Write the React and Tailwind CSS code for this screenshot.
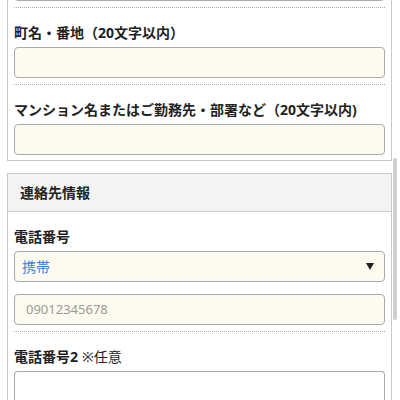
const font = { fontFamily: '"Noto Sans", "Noto Sans CJK JP", sans-serif' };

function Field({ label, note, children, last }) {
  return (
    <div
      className={
        "pt-[15px] " +
        (last ? "pb-[5px]" : "pb-[6px] border-b border-dotted border-[#a9a9a9]")
      }
    >
      <div className="text-[14px] leading-[20px] font-bold text-[#222] mb-[4px]">
        {label}
        {note && <span className="font-normal ml-[4px]">{note}</span>}
      </div>
      {children}
    </div>
  );
}

function TextBox({ placeholder }) {
  return (
    <div className="h-[31px] rounded-[4px] border border-[#aaaaaa] bg-[#fdfbef] flex items-center px-[11px] text-[13px] text-[#9a9a9a]">
      {placeholder}
    </div>
  );
}

export default function App() {
  return (
    <div className="relative w-[400px] h-[400px] overflow-hidden bg-white" style={font}>
      <div className="pl-[7px] pr-[8px]">
        {/* address card, top is scrolled off */}
        <div className="border border-[#c9c9c9] px-[6px] mt-[-31px]">
          <div className="pb-[6px] border-b border-dotted border-[#a9a9a9]">
            <TextBox />
          </div>
          <Field label="町名・番地（20文字以内）">
            <TextBox />
          </Field>
          <Field label="マンション名またはご勤務先・部署など（20文字以内)" last>
            <TextBox />
          </Field>
        </div>

        {/* contact card */}
        <div className="border border-[#c9c9c9] mt-[12px]">
          <div className="h-[38px] bg-[#f3f3f3] border-b border-[#c9c9c9] flex items-center pl-[12px] text-[14px] font-bold text-[#222]">
            連絡先情報
          </div>
          <div className="px-[6px]">
            <div className="pt-[15px] pb-[6px] border-b border-dotted border-[#a9a9a9]">
              <div className="text-[14px] leading-[20px] font-bold text-[#222] mb-[4px]">
                電話番号
              </div>
              <div className="h-[31px] rounded-[4px] border border-[#aaaaaa] bg-[#fdfbef] flex items-center justify-between pl-[7px] pr-[10px]">
                <span className="text-[14px] text-[#3d7ee6]">携帯</span>
                <svg width="8" height="7" viewBox="0 0 8 7">
                  <path d="M0 0 H8 L4 7 Z" fill="#222" />
                </svg>
              </div>
              <div className="mt-[12px]">
                <TextBox placeholder="09012345678" />
              </div>
            </div>
            <Field label="電話番号2" note="※任意" last>
              <div className="h-[40px] rounded-t-[4px] border border-b-0 border-[#aaaaaa] bg-white" />
            </Field>
          </div>
        </div>
      </div>

      {/* overlay scrollbar thumb */}
      <div className="absolute left-[393px] top-[158px] w-[4px] h-[162px] rounded-full bg-[#cfcfcf]" />
    </div>
  );
}
